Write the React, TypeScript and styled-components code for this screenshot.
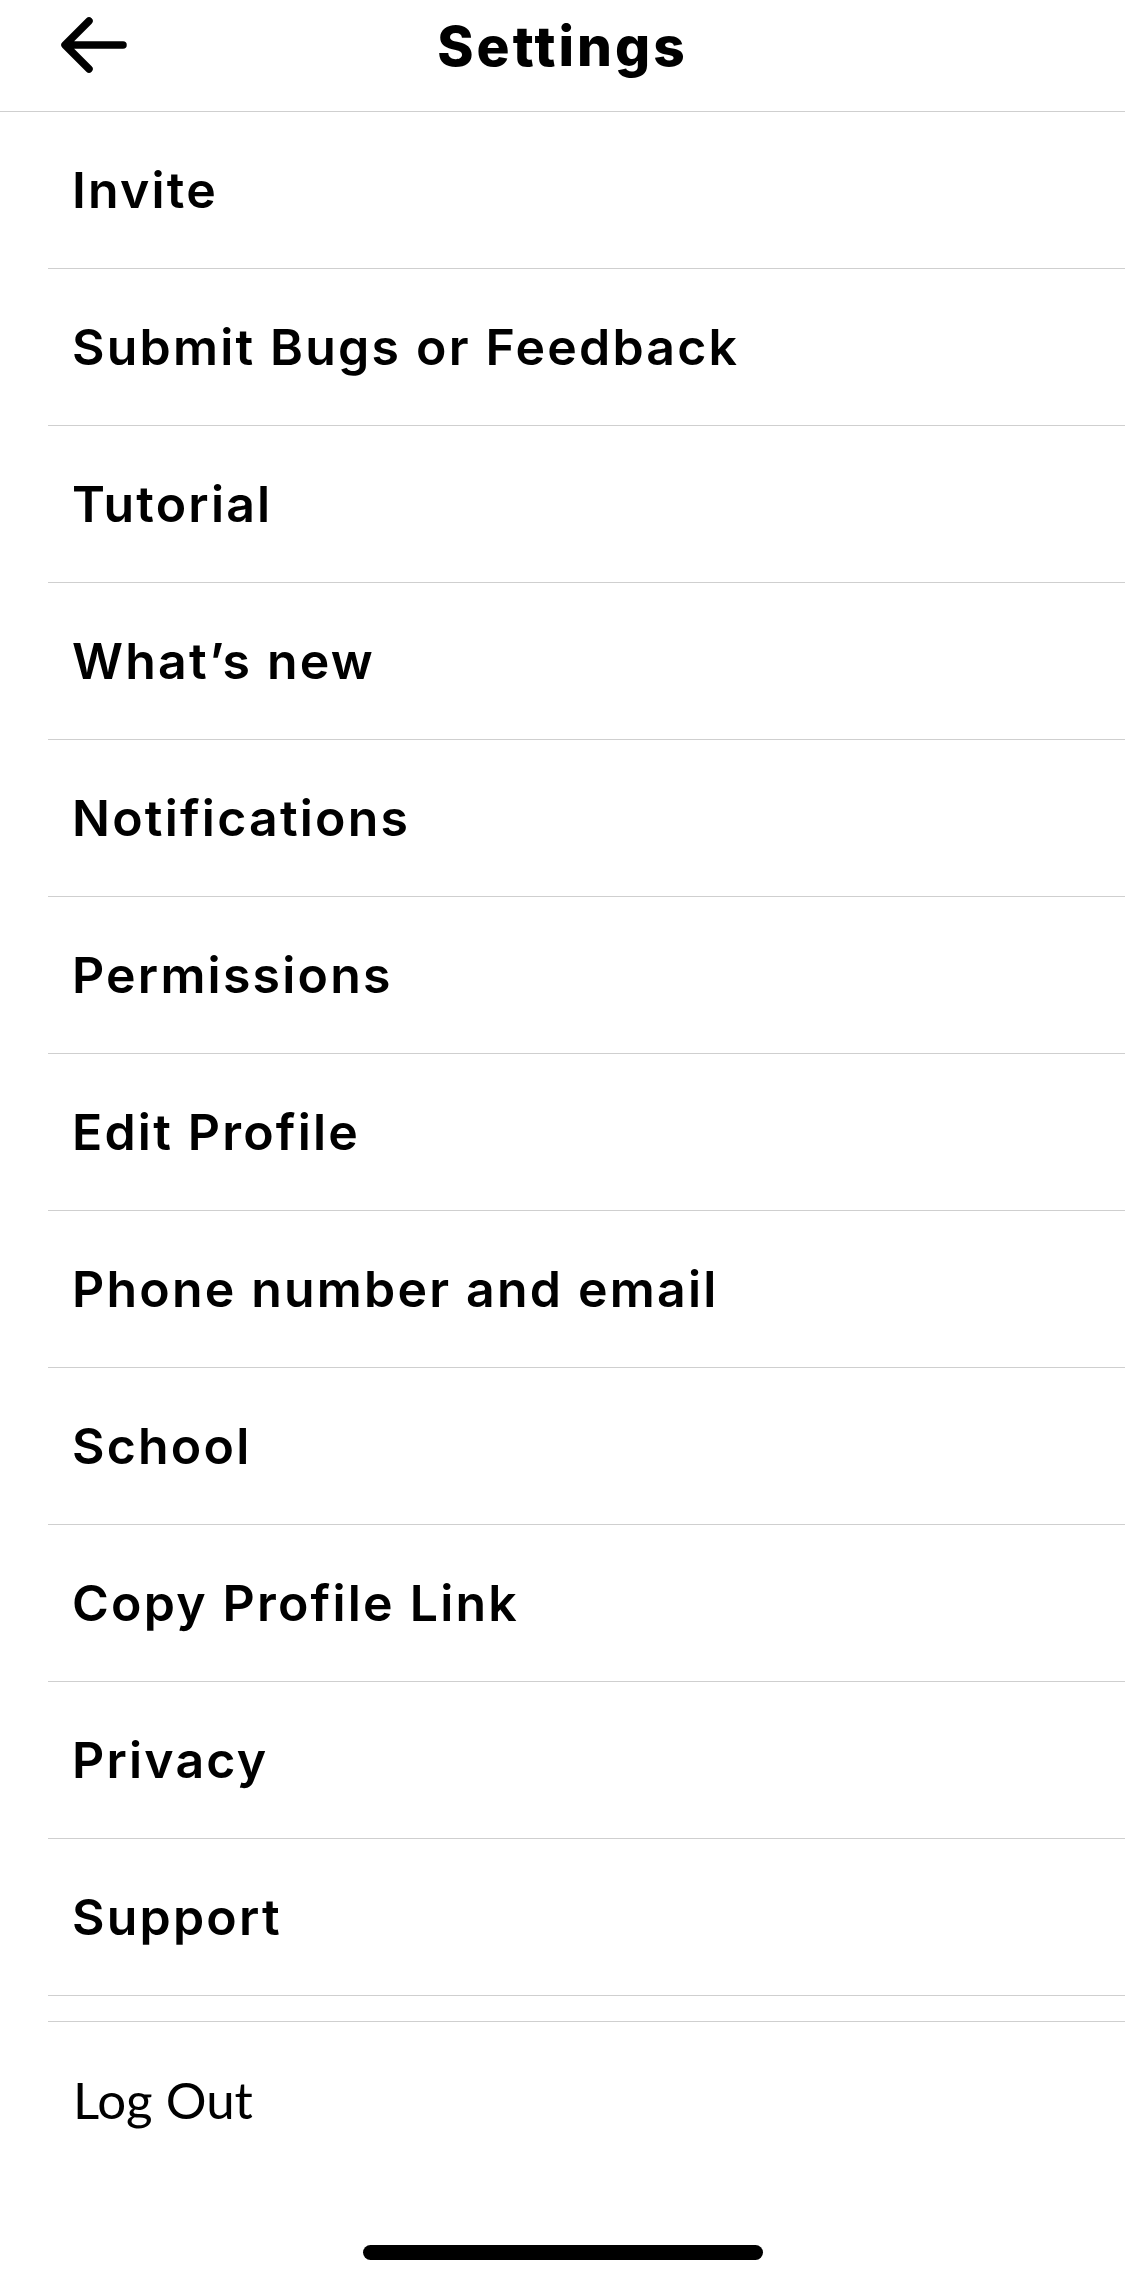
import styled, { createGlobalStyle } from "styled-components";

const items = [
  "Invite",
  "Submit Bugs or Feedback",
  "Tutorial",
  "What\u2019s new",
  "Notifications",
  "Permissions",
  "Edit Profile",
  "Phone number and email",
  "School",
  "Copy Profile Link",
  "Privacy",
  "Support",
];

const App = () => {
  return (
    <Screen>
      <GlobalStyle />
      <Header>
        <BackButton aria-label="Back">
          <svg width="66" height="56" viewBox="0 0 66 56" fill="none">
            <path
              d="M62 28H6M28 4L4 28l24 24"
              stroke="#000"
              strokeWidth="7.5"
              strokeLinecap="round"
              strokeLinejoin="round"
            />
          </svg>
        </BackButton>
        <Title>Settings</Title>
      </Header>
      <List>
        {items.map((item) => (
          <Row key={item}>
            <RowLabel>{item}</RowLabel>
          </Row>
        ))}
      </List>
      <Spacer />
      <LogOutRow>
        <LogOutLabel>Log Out</LogOutLabel>
      </LogOutRow>
      <HomeIndicator />
    </Screen>
  );
};

const GlobalStyle = createGlobalStyle`
  html, body {
    margin: 0;
    padding: 0;
    background: #fff;
  }
  * {
    box-sizing: border-box;
  }
`;

const Screen = styled.div`
  width: 1125px;
  height: 2284px;
  display: flex;
  flex-direction: column;
  background: #fff;
  color: #000;
  font-family: Inter, "Noto Sans", sans-serif;
  overflow: hidden;
`;

const Header = styled.header`
  position: relative;
  height: 111.5px;
  display: flex;
  align-items: center;
  justify-content: center;
  border-bottom: 1.5px solid #cfcfcf;
`;

const BackButton = styled.button`
  position: absolute;
  left: 61px;
  top: 17px;
  padding: 0;
  border: none;
  background: none;
  display: flex;
`;

const Title = styled.h1`
  margin: 0 0 18px;
  font-size: 55px;
  font-weight: 800;
  letter-spacing: 3px;
`;

const List = styled.div`
  display: flex;
  flex-direction: column;
`;

const Row = styled.div`
  margin-left: 48px;
  height: 157px;
  display: flex;
  align-items: center;
  padding-left: 24px;
  border-bottom: 1.5px solid #cfcfcf;
`;

const RowLabel = styled.span`
  font-size: 50px;
  font-weight: 600;
  letter-spacing: 2.2px;
`;

const Spacer = styled.div`
  margin-left: 48px;
  height: 26px;
  border-bottom: 1.5px solid #cfcfcf;
`;

const LogOutRow = styled.div`
  padding: 47px 0 0 73px;
`;

const LogOutLabel = styled.span`
  font-family: Lato, "Noto Sans", sans-serif;
  font-size: 51px;
  font-weight: 400;
`;

const HomeIndicator = styled.div`
  margin: auto auto 24px;
  width: 400px;
  height: 15px;
  border-radius: 8px;
  background: #000;
`;

export default App;
